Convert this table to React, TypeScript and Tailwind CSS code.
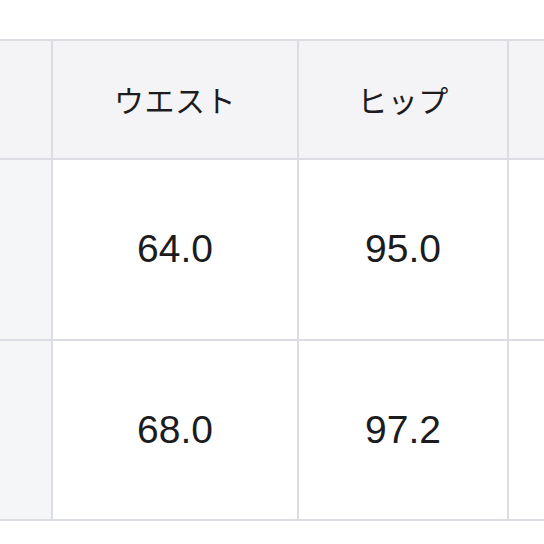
const rows = [
  { waist: '64.0', hip: '95.0' },
  { waist: '68.0', hip: '97.2' },
]

export default function App() {
  const head = 'flex items-center justify-center bg-[#f4f4f6]'
  const side = 'bg-[#f5f6f8]'
  const cell =
    'flex items-center justify-center bg-white text-[39px] text-[#1c1c1e]'
  const label =
    "text-[30px] font-normal tracking-[0.5px] text-[#1c1c1e] font-['Noto_Sans_CJK_JP',sans-serif]"

  return (
    <div className="w-[544px] h-[544px] bg-white overflow-hidden pt-[39px] font-['Liberation_Sans','Noto_Sans_CJK_JP',sans-serif]">
      <div className="grid grid-cols-[51px_244px_208px_1fr] grid-rows-[117px_179px_178px] gap-[2px] bg-[#dbdde2] border-y-2 border-[#dbdde2]">
        <div className={head} />
        <div className={`${head} ${label}`}>ウエスト</div>
        <div className={`${head} ${label}`}>ヒップ</div>
        <div className={head} />

        {rows.map((r) => (
          <>
            <div className={side} />
            <div className={cell}>{r.waist}</div>
            <div className={cell}>{r.hip}</div>
            <div className="bg-white" />
          </>
        ))}
      </div>
    </div>
  )
}
